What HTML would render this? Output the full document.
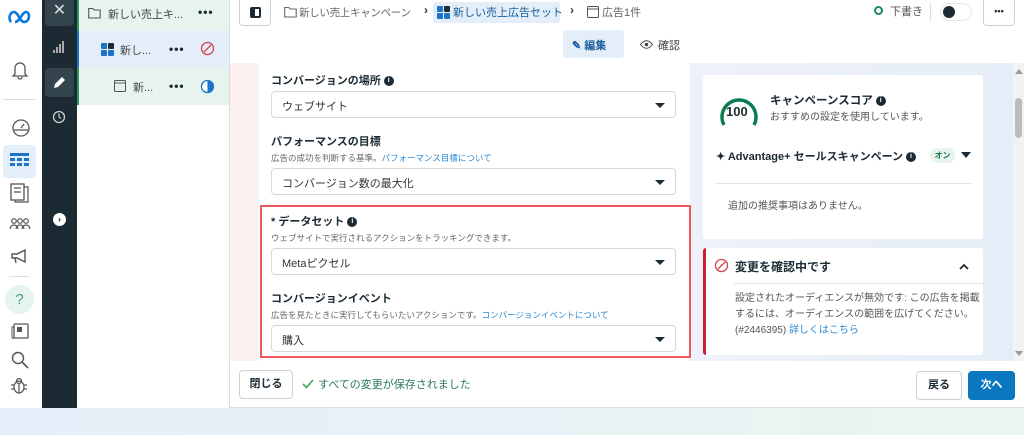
<!DOCTYPE html>
<html><head><meta charset="utf-8"><style>
*{box-sizing:border-box;margin:0;padding:0}
body{width:1024px;height:435px;overflow:hidden;position:relative;font-family:"Liberation Sans","Noto Sans CJK JP",sans-serif;color:#1c2b33;background:#fff}
.a{position:absolute}
.sel{position:absolute;left:271px;width:405px;height:27px;border:1px solid #d5d9dc;border-radius:4px;background:#fff;font-size:11px;padding:6px 10px;color:#333}
.sel:after{content:"";position:absolute;right:10px;top:11px;border-left:5px solid transparent;border-right:5px solid transparent;border-top:5px solid #1c2b33}
.lbl{position:absolute;left:271px;font-size:11px;font-weight:bold}
.help{position:absolute;left:271px;font-size:8.5px;color:#666}
.i{display:inline-block;width:10px;height:10px;border-radius:50%;background:#1c2b33;color:#fff;font-size:7px;text-align:center;line-height:10px;vertical-align:middle;margin-left:3px;font-weight:bold}
.lk{color:#2a8ad4}
.dots{font-size:12px;font-weight:bold;letter-spacing:1px}
</style></head><body>
<div class="a" style="left:0;top:408px;width:1024px;height:27px;background:linear-gradient(90deg,#e5eef8,#e8f2f6,#eaf5f0)"></div>
<div class="a" style="left:0;top:0;width:42px;height:408px;background:#fff">
<svg class="a" style="left:8px;top:10px" width="26" height="14" viewBox="0 0 26 14"><path d="M3 12C0 8 2 2 6 2c4 0 6 10 10 10s5-4 5-6-1-4-3-4c-4 0-6 10-11 10" fill="none" stroke="#0a78e0" stroke-width="2.6"/></svg>
<svg class="a" style="left:11px;top:60px" width="18" height="20"><path d="M4 14V8a5 5 0 0110 0v6l2 2H2zM7 17a2 2 0 004 0" fill="none" stroke="#555" stroke-width="1.3"/></svg>
<div class="a" style="left:3px;top:99px;width:33px;height:1px;background:#ddd"></div>
<svg class="a" style="left:11px;top:119px" width="20" height="18"><circle cx="10" cy="9" r="8" fill="none" stroke="#555" stroke-width="1.3"/><path d="M3 11h14M10 9l3-4" stroke="#555" stroke-width="1.3"/></svg>
<div class="a" style="left:3px;top:145px;width:33px;height:33px;background:#e3eef8;border-radius:4px"></div>
<svg class="a" style="left:10px;top:153px" width="19" height="16"><rect x="0" y="0" width="19" height="3" fill="#1b74c5"/><g fill="#1b74c5"><rect x="0" y="5" width="5" height="3"/><rect x="7" y="5" width="5" height="3"/><rect x="14" y="5" width="5" height="3"/><rect x="0" y="10" width="5" height="3"/><rect x="7" y="10" width="5" height="3"/><rect x="14" y="10" width="5" height="3"/></g></svg>
<svg class="a" style="left:10px;top:183px" width="20" height="20"><rect x="1" y="1" width="13" height="16" fill="none" stroke="#555" stroke-width="1.3"/><path d="M14 4h4v15H5v-2M4 5h7M4 9h7" stroke="#555" fill="none" stroke-width="1.2"/></svg>
<svg class="a" style="left:9px;top:217px" width="22" height="14"><g fill="none" stroke="#555" stroke-width="1.2"><circle cx="5" cy="4" r="2.3"/><circle cx="11" cy="4" r="2.3"/><circle cx="17" cy="4" r="2.3"/><path d="M1 12a4 4 0 018 0M7 12a4 4 0 018 0M13 12a4 4 0 018 0"/></g></svg>
<svg class="a" style="left:11px;top:249px" width="18" height="16"><path d="M1 5h5l8-4v12l-8-4H1zM4 9l1 5" fill="none" stroke="#555" stroke-width="1.4"/></svg>
<div class="a" style="left:9px;top:276px;width:20px;height:1px;background:#ddd"></div>
<div class="a" style="left:5px;top:285px;width:29px;height:29px;border-radius:50%;background:#e5f4ef;color:#4a9a8a;text-align:center;line-height:29px;font-size:15px">?</div>
<svg class="a" style="left:11px;top:323px" width="18" height="16"><rect x="3" y="1" width="14" height="14" rx="1" fill="none" stroke="#555" stroke-width="1.3"/><rect x="6" y="4" width="5" height="5" fill="#555"/><path d="M3 4H1v10a2 2 0 002 2" fill="none" stroke="#555"/></svg>
<svg class="a" style="left:11px;top:351px" width="18" height="18"><circle cx="7" cy="7" r="5.5" fill="none" stroke="#555" stroke-width="1.4"/><path d="M11 11l6 6" stroke="#555" stroke-width="1.6"/></svg>
<svg class="a" style="left:11px;top:377px" width="16" height="17"><g fill="none" stroke="#555" stroke-width="1.2"><ellipse cx="8" cy="10" rx="5" ry="6"/><circle cx="8" cy="4" r="2.5"/><path d="M3 8H0M3 12H0M13 8h3M13 12h3M8 6v10"/></g></svg>
</div>
<div class="a" style="left:42px;top:0;width:35px;height:408px;background:#1c2b33">
<div class="a" style="left:3px;top:-4px;width:29px;height:30px;background:#34444d;border-radius:4px;color:#ddd;text-align:center;line-height:30px;font-size:16px">✕</div>
<svg class="a" style="left:11px;top:41px" width="13" height="12"><g fill="#aaa"><rect x="0" y="9" width="2" height="3"/><rect x="3" y="6" width="2" height="6"/><rect x="6" y="3" width="2" height="9"/><rect x="9" y="0" width="2" height="12"/></g></svg>
<div class="a" style="left:3px;top:68px;width:29px;height:29px;background:#34444d;border-radius:4px"></div>
<svg class="a" style="left:11px;top:76px" width="13" height="13"><path d="M1 12l1-4 7-7 3 3-7 7z" fill="#fff"/></svg>
<svg class="a" style="left:10px;top:110px" width="14" height="14"><circle cx="7" cy="7" r="5.5" fill="none" stroke="#ccc" stroke-width="1.3"/><path d="M7 3.5V7l2 1.5" stroke="#ccc" fill="none" stroke-width="1.2"/></svg>
<div class="a" style="left:11px;top:213px;width:13px;height:13px;border-radius:50%;background:#fff;color:#1c2b33;font-size:9px;font-weight:bold;text-align:center;line-height:13px">›</div>
</div>
<div class="a" style="left:77px;top:0;width:153px;height:408px;background:#fff;border-right:1px solid #ddd">
<div class="a" style="left:0;top:0;width:152px;height:31px;background:#e7f4ee;border-left:2px solid #2a9a5a"></div>
<div class="a" style="left:0;top:31px;width:152px;height:37px;background:#e3eef8;border-left:2px solid #1b74c5"></div>
<div class="a" style="left:0;top:68px;width:152px;height:37px;background:#e7f4ee;border-left:2px solid #2a9a5a"></div>
<svg class="a" style="left:11px;top:7px" width="13" height="12"><path d="M.7 1.5h4l1.5 1.5h6v8H.7z" fill="none" stroke="#555" stroke-width="1.1"/></svg>
<div class="a" style="left:31px;top:6px;font-size:11px;color:#444">新しい売上キ...</div>
<div class="a dots" style="left:121px;top:5px">•••</div>
<svg class="a" style="left:24px;top:43px" width="13" height="13"><g fill="#1b74c5"><rect width="6" height="6" rx="1"/><rect x="7" width="6" height="6" rx="1" fill="#1c2b33"/><rect y="7" width="6" height="6" rx="1"/><rect x="7" y="7" width="6" height="6" rx="1"/></g></svg>
<div class="a" style="left:43px;top:42px;font-size:11px;color:#444">新し...</div>
<div class="a dots" style="left:92px;top:42px">•••</div>
<svg class="a" style="left:123px;top:41px" width="15" height="15"><circle cx="7.5" cy="7.5" r="6" fill="none" stroke="#d0454f" stroke-width="1.3"/><path d="M4 11l7-7" stroke="#d0454f" stroke-width="1.3"/></svg>
<svg class="a" style="left:37px;top:80px" width="12" height="12"><rect x=".5" y=".5" width="11" height="11" rx="1" fill="none" stroke="#555"/><path d="M1 3h10" stroke="#555"/></svg>
<div class="a" style="left:56px;top:79px;font-size:11px;color:#444">新...</div>
<div class="a dots" style="left:92px;top:79px">•••</div>
<svg class="a" style="left:123px;top:79px" width="15" height="15"><circle cx="7.5" cy="7.5" r="6" fill="#fff" stroke="#1b74c5" stroke-width="1.3"/><path d="M7.5 1.5a6 6 0 010 12z" fill="#1b74c5"/></svg>
</div>
<div class="a" style="left:239px;top:-3px;width:32px;height:29px;border:1px solid #ccd0d5;border-radius:4px"><div class="a" style="left:10px;top:9px;width:11px;height:11px;border:2px solid #1c2b33;border-left-width:5px;border-radius:2px"></div></div>
<svg class="a" style="left:284px;top:6px" width="13" height="12"><path d="M.7 1.5h4l1.5 1.5h6v8H.7z" fill="none" stroke="#666" stroke-width="1.1"/></svg>
<div class="a" style="left:299px;top:5px;font-size:10.5px;color:#666;white-space:nowrap;letter-spacing:-0.3px">新しい売上キャンペーン</div>
<div class="a" style="left:424px;top:3px;font-size:12px;color:#333;font-weight:bold">›</div>
<div class="a" style="left:433px;top:2px;width:127px;height:21px;background:#e3eef8;border-radius:3px"></div>
<svg class="a" style="left:437px;top:6px" width="13" height="13"><g fill="#1b74c5"><rect width="6" height="6" rx="1"/><rect x="7" width="6" height="6" rx="1" fill="#1c2b33"/><rect y="7" width="6" height="6" rx="1"/><rect x="7" y="7" width="6" height="6" rx="1"/></g></svg>
<div class="a" style="left:453px;top:4px;font-size:11px;color:#1b5e9c;white-space:nowrap">新しい売上広告セット</div>
<div class="a" style="left:570px;top:3px;font-size:12px;color:#333;font-weight:bold">›</div>
<svg class="a" style="left:587px;top:6px" width="12" height="12"><rect x=".5" y=".5" width="11" height="11" rx="1" fill="none" stroke="#555"/><path d="M1 3h10" stroke="#555"/></svg>
<div class="a" style="left:602px;top:4px;font-size:11px;color:#666">広告1件</div>
<div class="a" style="left:563px;top:30px;width:61px;height:28px;background:#e3eef8;border-radius:3px;font-size:11px;font-weight:bold;color:#1b5e9c;padding:7px 0 0 9px">✎ 編集</div>
<svg class="a" style="left:640px;top:40px" width="13" height="9"><path d="M.5 4.5Q6.5-3 12.5 4.5 6.5 12 .5 4.5z" fill="none" stroke="#444"/><circle cx="6.5" cy="4.5" r="1.8" fill="#444"/></svg>
<div class="a" style="left:658px;top:37px;font-size:11px;color:#444">確認</div>
<div class="a" style="left:874px;top:6px;width:9px;height:9px;border:2px solid #1a8a5a;border-radius:50%"></div>
<div class="a" style="left:890px;top:3px;font-size:11px;color:#555">下書き</div>
<div class="a" style="left:930px;top:3px;width:1px;height:18px;background:#ddd"></div>
<div class="a" style="left:940px;top:3px;width:32px;height:18px;border:1px solid #e3e5e8;border-radius:9px"><div class="a" style="left:2px;top:2px;width:12px;height:12px;border-radius:50%;background:#1c2b33"></div></div>
<div class="a" style="left:983px;top:-3px;width:32px;height:29px;border:1px solid #ccd0d5;border-radius:4px;text-align:center;font-size:9px;font-weight:bold;line-height:26px">•••</div>
<div class="a" style="left:230px;top:63px;width:794px;height:298px;background:linear-gradient(90deg,#fbf1f1,#eef1f9 60%,#e5edf8)"></div>
<div class="a" style="left:1013px;top:63px;width:11px;height:298px;background:#f2f2f2"></div>
<div class="a" style="left:1015px;top:98px;width:7px;height:40px;background:#bbb;border-radius:4px"></div>
<div class="a" style="left:1015px;top:69px;border-left:4px solid transparent;border-right:4px solid transparent;border-bottom:5px solid #999"></div>
<div class="a" style="left:1015px;top:351px;border-left:4px solid transparent;border-right:4px solid transparent;border-top:5px solid #999"></div>
<div class="a" style="left:259px;top:63px;width:431px;height:298px;background:#fff"></div>
<div class="lbl" style="top:72px">コンバージョンの場所<span class="i">i</span></div>
<div class="sel" style="top:91px">ウェブサイト</div>
<div class="lbl" style="top:133px">パフォーマンスの目標</div>
<div class="help" style="top:152px">広告の成功を判断する基準。<span class="lk">パフォーマンス目標について</span></div>
<div class="sel" style="top:168px">コンバージョン数の最大化</div>
<div class="a" style="left:260px;top:205px;width:431px;height:153px;border:2px solid #f0595c"></div>
<div class="lbl" style="top:213px">* データセット<span class="i">i</span></div>
<div class="help" style="top:232px">ウェブサイトで実行されるアクションをトラッキングできます。</div>
<div class="sel" style="top:248px">Metaピクセル</div>
<div class="lbl" style="top:290px">コンバージョンイベント</div>
<div class="help" style="top:309px">広告を見たときに実行してもらいたいアクションです。<span class="lk">コンバージョンイベントについて</span></div>
<div class="sel" style="top:325px">購入</div>
<div class="a" style="left:703px;top:75px;width:280px;height:164px;background:#fff;border-radius:3px"></div>
<svg class="a" style="left:716px;top:89px" width="46" height="40"><path d="M8 36A17 17 0 1138 36" fill="none" stroke="#0a7d50" stroke-width="3.5"/></svg>
<div class="a" style="left:726px;top:104px;font-size:13px;font-weight:bold">100</div>
<div class="a" style="left:770px;top:92px;font-size:11.5px;font-weight:bold">キャンペーンスコア<span class="i">i</span></div>
<div class="a" style="left:770px;top:108px;font-size:10px;color:#555">おすすめの設定を使用しています。</div>
<div class="a" style="left:716px;top:148px;font-size:11px;font-weight:bold">✦ Advantage+ セールスキャンペーン<span class="i">i</span></div>
<div class="a" style="left:930px;top:148px;width:25px;height:15px;background:#e7f4ee;border-radius:8px;font-size:8px;color:#1a7a4a;font-weight:bold;text-align:center;line-height:15px">オン</div>
<div class="a" style="left:961px;top:152px;border-left:5px solid transparent;border-right:5px solid transparent;border-top:6px solid #1c2b33"></div>
<div class="a" style="left:715px;top:183px;width:257px;height:1px;background:#e5e5e5"></div>
<div class="a" style="left:728px;top:197px;font-size:10px;color:#555">追加の推奨事項はありません。</div>
<div class="a" style="left:703px;top:248px;width:280px;height:107px;background:#fff;border-left:3px solid #c8202c;border-radius:3px"></div>
<svg class="a" style="left:714px;top:258px" width="15" height="15"><circle cx="7.5" cy="7.5" r="6" fill="none" stroke="#d0454f" stroke-width="1.3"/><path d="M4 11l7-7" stroke="#d0454f" stroke-width="1.3"/></svg>
<div class="a" style="left:735px;top:258px;font-size:12px;font-weight:bold">変更を確認中です</div>
<svg class="a" style="left:959px;top:263px" width="10" height="7"><path d="M1 6l4-4 4 4" fill="none" stroke="#1c2b33" stroke-width="1.8"/></svg>
<div class="a" style="left:734px;top:283px;width:250px;height:1px;background:#e5e5e5"></div>
<div class="a" style="left:735px;top:291px;font-size:10px;line-height:16px;color:#555;width:245px">設定されたオーディエンスが無効です: この広告を掲載するには、オーディエンスの範囲を広げてください。(#2446395) <span class="lk">詳しくはこちら</span></div>
<div class="a" style="left:230px;top:361px;width:794px;height:47px;background:#fff;border-bottom:1px solid #ddd"></div>
<div class="a" style="left:239px;top:370px;width:54px;height:29px;border:1px solid #ccd0d5;border-radius:4px;font-size:11px;font-weight:bold;text-align:center;line-height:27px">閉じる</div>
<svg class="a" style="left:302px;top:379px" width="12" height="10"><path d="M1 5l3.5 3.5L11 1" fill="none" stroke="#3aaa5a" stroke-width="1.6"/></svg>
<div class="a" style="left:318px;top:376px;font-size:11px;color:#2a7a5a">すべての変更が保存されました</div>
<div class="a" style="left:916px;top:371px;width:46px;height:29px;border:1px solid #ccd0d5;border-radius:4px;font-size:11px;font-weight:bold;text-align:center;line-height:27px">戻る</div>
<div class="a" style="left:968px;top:371px;width:47px;height:29px;background:#0a78be;border-radius:4px;font-size:11px;font-weight:bold;color:#fff;text-align:center;line-height:29px">次へ</div>
</body></html>
